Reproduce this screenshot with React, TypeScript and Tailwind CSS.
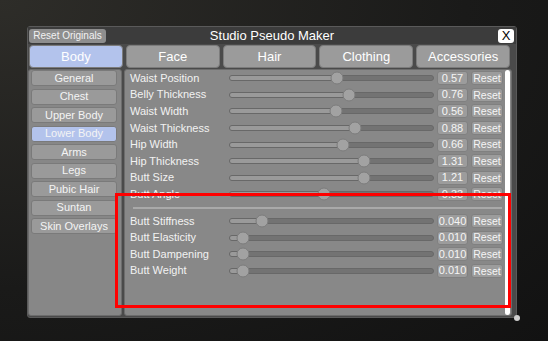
import React from "react";

type Row = { label: string; knob: number; value: string };

const bodyRows: Row[] = [
  { label: "Waist Position", knob: 107, value: "0.57" },
  { label: "Belly Thickness", knob: 119, value: "0.76" },
  { label: "Waist Width", knob: 106, value: "0.56" },
  { label: "Waist Thickness", knob: 125, value: "0.88" },
  { label: "Hip Width", knob: 113, value: "0.66" },
  { label: "Hip Thickness", knob: 134, value: "1.31" },
  { label: "Butt Size", knob: 134, value: "1.21" },
  { label: "Butt Angle", knob: 94, value: "0.33" },
];

const physicsRows: Row[] = [
  { label: "Butt Stiffness", knob: 32, value: "0.040" },
  { label: "Butt Elasticity", knob: 13, value: "0.010" },
  { label: "Butt Dampening", knob: 13, value: "0.010" },
  { label: "Butt Weight", knob: 13, value: "0.010" },
];

const tabs = ["Body", "Face", "Hair", "Clothing", "Accessories"];
const categories = [
  "General",
  "Chest",
  "Upper Body",
  "Lower Body",
  "Arms",
  "Legs",
  "Pubic Hair",
  "Suntan",
  "Skin Overlays",
];

function SliderRow({ row }: { row: Row }) {
  return (
    <div className="flex h-[16.6px] items-center pl-[5px]">
      <div className="w-[99px] text-[11px] leading-none text-[#f2f2f2] whitespace-nowrap">{row.label}</div>
      {/* slider */}
      <div className="relative h-[6px] w-[205px] rounded-full border border-[#686868] bg-[#737373]">
        <div className="h-full rounded-full bg-[#9a9a9a]" style={{ width: row.knob }} />
        <div
          className="absolute top-1/2 h-[13px] w-[13px] -translate-x-1/2 -translate-y-1/2 rounded-full border border-[#7c7c7c] bg-[#a2a2a2]"
          style={{ left: row.knob }}
        />
      </div>
      <div className="ml-[3px] flex h-[14px] w-[31px] items-center justify-center rounded-[3px] border border-[#808080] bg-[#9c9c9c] text-[11px] leading-none text-[#f5f5f5]">
        {row.value}
      </div>
      <div className="ml-[3px] flex h-[14px] w-[32px] items-center justify-center rounded-[3px] border border-[#808080] bg-[#9c9c9c] text-[10.5px] leading-none text-[#f5f5f5]">
        Reset
      </div>
    </div>
  );
}

export default function App() {
  return (
    <div className="relative h-[341px] w-[548px] overflow-hidden bg-[radial-gradient(ellipse_at_top_left,#2e2d29,#1a1a19_60%,#121212)] font-['Liberation_Sans',Arial,sans-serif] pl-[27px] pt-[26px]">
      {/* window */}
      <div className="flex h-[292px] w-[490px] flex-col rounded-[3px] border border-[#5a5a5a] bg-[#4a4a4a]">
        {/* header */}
        <div className="grid h-[17px] grid-cols-[1fr_auto_1fr] items-center bg-[#3c3c3c] px-[1px]">
          <div className="flex">
            <div className="flex h-[14px] w-[77px] items-center justify-center rounded-[3px] bg-[#8e8e8e] text-[10px] leading-none text-[#f2f2f2]">
              Reset Originals
            </div>
          </div>
          <div className="text-[13px] leading-none text-white">Studio Pseudo Maker</div>
          <div className="flex justify-end pr-[1px]">
            <div className="flex h-[14px] w-[16px] items-center justify-center rounded-[3px] bg-white text-[13px] leading-none text-black">
              X
            </div>
          </div>
        </div>

        {/* tabs */}
        <div className="mt-[1px] flex h-[23px] gap-[3px] pl-[1px] pr-[6px]">
          {tabs.map((t) => (
            <div
              key={t}
              className={`flex flex-1 items-center justify-center rounded-[4px] border border-[#7c7c7c] text-[13px] leading-none text-white ${
                t === "Body" ? "bg-[#b3c3ec]" : "bg-[#9b9b9b]"
              }`}
            >
              {t}
            </div>
          ))}
        </div>

        {/* panels */}
        <div className="mt-[1px] flex flex-1 gap-[2px] pb-[1px] pr-[4px]">
          <div className="flex w-[94px] flex-col gap-[2.5px] rounded-[3px] border border-[#6c6c6c] bg-[#878787] pl-[2px] pt-0">
            {categories.map((c) => (
              <div
                key={c}
                className={`flex h-[16px] w-[86px] items-center justify-center rounded-[3px] border border-[#7a7a7a] text-[11px] leading-none text-[#f4f4f4] ${
                  c === "Lower Body" ? "bg-[#b3c3ec]" : "bg-[#9a9a9a]"
                }`}
              >
                {c}
              </div>
            ))}
          </div>

          <div className="flex flex-1 rounded-[3px] border border-[#6c6c6c] bg-[#888888]">
            <div className="flex-1">
              {bodyRows.map((r) => (
                <SliderRow key={r.label} row={r} />
              ))}
              <div className="my-[4px] ml-[8px] h-[2px] w-[369px] bg-[#a9a9a9]" />
              {physicsRows.map((r) => (
                <SliderRow key={r.label} row={r} />
              ))}
            </div>
            <div className="mr-[1px] w-[5px] rounded-full bg-white" />
          </div>
        </div>
      </div>

      {/* resize handle */}
      <div className="absolute left-[514px] top-[315px] h-[6px] w-[6px] rounded-full bg-[#cfcfcf]" />

      {/* highlight annotation */}
      <div className="absolute left-[115px] top-[193px] h-[115px] w-[396px] border-[3px] border-[#ff0000]" />
    </div>
  );
}
